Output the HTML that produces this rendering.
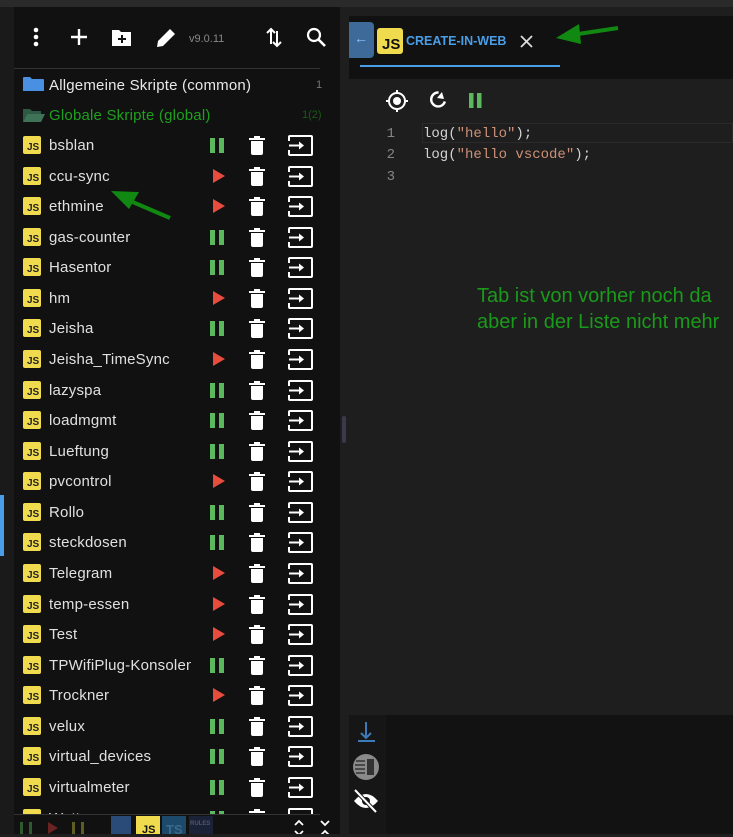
<!DOCTYPE html>
<html><head><meta charset="utf-8"><style>
*{margin:0;padding:0;box-sizing:border-box}
body{width:733px;height:834px;overflow:hidden;background:#1e1e1e;font-family:"Liberation Sans",sans-serif;position:relative}
.a{position:absolute}
.row{position:absolute;left:14px;width:326px;height:30px}
.js{position:absolute;left:9px;top:6px;width:18px;height:18px;background:#f0db4f;border-radius:2px;font:bold 10px "Liberation Sans",sans-serif;color:#222;padding:7px 0 0 4px;line-height:10px}
.nm{position:absolute;left:35px;top:7px;font-size:15px;color:#e0e0e0;white-space:nowrap;width:142px;overflow:hidden;letter-spacing:0.2px}
.ps{position:absolute;left:196px;top:8px;width:14px;height:15px;border-left:5px solid #5cb85c;border-right:5px solid #5cb85c}
.pl{position:absolute;left:199px;top:8px;width:0;height:0;border-left:12px solid #e74c3c;border-top:7px solid transparent;border-bottom:7px solid transparent}
.tr{position:absolute;left:235px;top:6px}
.mv{position:absolute;left:274px;top:5px}
</style></head><body>
<div class="a" style="left:0;top:0;width:733px;height:7px;background:#2a2a2a"></div>
<div class="a" style="left:0;top:7px;width:14px;height:827px;background:#1a1a1a"></div>
<div class="a" style="left:0;top:495px;width:4px;height:61px;background:#4a9ee8"></div>
<div class="a" style="left:14px;top:7px;width:326px;height:827px;background:#111"></div>
<svg class="a" style="left:24px;top:25px" width="310" height="26" viewBox="0 0 310 26">
<circle cx="12" cy="5" r="2.3" fill="#fff"/><circle cx="12" cy="12" r="2.3" fill="#fff"/><circle cx="12" cy="19" r="2.3" fill="#fff"/>
<path d="M55 4v16M47 12h16" stroke="#fff" stroke-width="2.4"/>
<path d="M88 5h7l2 2h10v14H88z" fill="#fff"/><path d="M98 10v8M94 14h8" stroke="#111" stroke-width="2"/>
<path d="M133 22l1-6 12-12 5 5-12 12z" fill="#fff"/>
<text x="165" y="17" font-size="11" fill="#888" font-family="Liberation Sans">v9.0.11</text>
<path d="M247 19V4M243 8l4-4 4 4M253 6v15M249 17l4 4 4-4" stroke="#fff" stroke-width="2" fill="none"/>
<circle cx="290" cy="10" r="6" stroke="#fff" stroke-width="2.2" fill="none"/><path d="M294 14l7 7" stroke="#fff" stroke-width="2.6"/>
</svg>
<div class="a" style="left:14px;top:68px;width:306px;height:1px;background:#333"></div>
<svg class="a" style="left:23px;top:76px" width="22" height="16"><path d="M0 2a1 1 0 0 1 1-1h6l2 2h11a1 1 0 0 1 1 1v11H0z" fill="#4a90e2"/></svg>
<div class="a" style="left:49px;top:77px;font-size:15px;color:#e8e8e8;letter-spacing:0.2px">Allgemeine Skripte (common)</div>
<div class="a" style="left:316px;top:79px;font-size:11px;color:#777">1</div>
<svg class="a" style="left:23px;top:107px" width="22" height="16"><path d="M0 2h7l2 2h9v3H4L0 15z" fill="#2e5a45"/><path d="M4 7h18l-4 8H0z" fill="#3e7358"/></svg>
<div class="a" style="left:49px;top:107px;font-size:15px;color:#1ea01e;letter-spacing:0.2px">Globale Skripte (global)</div>
<div class="a" style="left:302px;top:109px;font-size:11px;color:#1a5a1a">1(2)</div>
<div id="rows"></div>
<script>
var items=[["bsblan",1],["ccu-sync",0],["ethmine",0],["gas-counter",1],["Hasentor",1],["hm",0],["Jeisha",1],["Jeisha_TimeSync",0],["lazyspa",1],["loadmgmt",1],["Lueftung",1],["pvcontrol",0],["Rollo",1],["steckdosen",1],["Telegram",0],["temp-essen",0],["Test",0],["TPWifiPlug-Konsolen",1],["Trockner",0],["velux",1],["virtual_devices",1],["virtualmeter",1],["Watt",1]];
var h="";
items.forEach(function(it,i){var y=130+i*30.57;
h+='<div class="row" style="top:'+y+'px"><div class="js">JS</div><div class="nm">'+it[0]+'</div>'+(it[1]?'<div class="ps"></div>':'<div class="pl"></div>')+
'<svg class="tr" width="16" height="19"><rect x="0" y="2" width="16" height="2" fill="#fff"/><rect x="5" y="0" width="6" height="3" fill="#fff"/><path d="M2 5h12v12a2 2 0 0 1-2 2H4a2 2 0 0 1-2-2z" fill="#fff"/></svg>'+
'<svg class="mv" width="25" height="21"><path d="M1 6V2a1 1 0 0 1 1-1h21a1 1 0 0 1 1 1v17a1 1 0 0 1-1 1H2a1 1 0 0 1-1-1v-4" stroke="#fff" stroke-width="2" fill="none"/><path d="M1 10.5h11" stroke="#fff" stroke-width="2"/><path d="M11 6.5l5 4-5 4z" fill="#fff"/></svg></div>';});
document.getElementById("rows").innerHTML=h;
</script>
<div class="a" style="left:14px;top:814px;width:306px;height:20px;background:#111;border-top:1px solid #333"></div>
<div class="a" style="left:20px;top:822px;width:12px;height:12px;border-left:3px solid #2f5a2f;border-right:3px solid #2f5a2f"></div>
<div class="a" style="left:48px;top:822px;border-left:10px solid #6a2222;border-top:6px solid transparent;border-bottom:6px solid transparent"></div>
<div class="a" style="left:72px;top:822px;width:12px;height:12px;border-left:3px solid #5e5e22;border-right:3px solid #5e5e22"></div>
<div class="a" style="left:111px;top:816px;width:20px;height:18px;background:#2a4a78"></div>
<div class="a" style="left:136px;top:816px;width:24px;height:18px;background:#f0db4f;font:bold 11px 'Liberation Sans';color:#111;padding:8px 0 0 6px">JS</div>
<div class="a" style="left:162px;top:816px;width:24px;height:18px;background:#1d4a6a;font:bold 13px 'Liberation Sans';color:#3a6a8a;padding:6px 0 0 4px">TS</div>
<div class="a" style="left:189px;top:816px;width:24px;height:18px;background:#1a2238;font:bold 6px 'Liberation Sans';color:#556;padding:5px 0 0 1px">RULES</div>
<svg class="a" style="left:292px;top:818px" width="42" height="16"><path d="M3 7l4-4 4 4M3 13l4 4 4-4M29 3l4 4 4-4M29 17l4-4 4 4" stroke="#fff" stroke-width="1.8" fill="none"/></svg>
<div class="a" style="left:342px;top:416px;width:4px;height:27px;background:#3a3a4a;border-radius:2px"></div>
<div class="a" style="left:349px;top:16px;width:384px;height:63px;background:#111"></div>
<div class="a" style="left:349px;top:22px;width:25px;height:36px;background:#3d6a99;border-radius:0 4px 4px 0;color:#8cc3ff;font-size:14px;padding:8px 0 0 5px">←</div>
<div class="a" style="left:377px;top:28px;width:26px;height:26px;background:#f0db4f;border-radius:3px;font:bold 15px 'Liberation Sans';color:#111;padding:9px 0 0 5px;line-height:15px">JS</div>
<div class="a" style="left:406px;top:34px;font-size:12.5px;font-weight:bold;color:#4a9ee8">CREATE-IN-WEB</div>
<svg class="a" style="left:520px;top:35px" width="13" height="13"><path d="M1 1l11 11M12 1L1 12" stroke="#ddd" stroke-width="1.8"/></svg>
<div class="a" style="left:360px;top:65px;width:200px;height:2px;background:#4a9ee8"></div>
<svg class="a" style="left:385px;top:89px" width="110" height="24">
<circle cx="12" cy="12" r="8" stroke="#fff" stroke-width="2" fill="none"/><circle cx="12" cy="12" r="4" fill="#fff"/><path d="M12 1v4M12 19v4M1 12h4M19 12h4" stroke="#fff" stroke-width="2"/>
<path d="M58 6.5A7 7 0 1 0 58 17.5" stroke="#fff" stroke-width="2.4" fill="none" transform="rotate(-35 51 12)"/><path d="M57 3l2 7-7-1z" fill="#fff"/>
<rect x="84" y="4" width="4.5" height="15" fill="#5cb85c"/><rect x="92" y="4" width="4.5" height="15" fill="#5cb85c"/>
</svg>
<div class="a" style="left:422px;top:123px;width:311px;height:20px;border:1px solid #2a2a2a"></div>
<div class="a" style="left:380px;top:124px;font:14px/21.3px 'Liberation Mono',monospace;color:#858585;text-align:right;width:15px">1<br>2<br>3</div>
<div class="a" style="left:423px;top:124px;font:14px/21.3px 'Liberation Mono',monospace;color:#d4d4d4;white-space:pre">log(<span style="color:#ce9178">"hello"</span>);
log(<span style="color:#ce9178">"hello vscode"</span>);</div>
<div class="a" style="left:477px;top:283px;font-size:20px;line-height:26px;color:#1a9a1a;white-space:nowrap">Tab ist von vorher noch da<br>aber in der Liste nicht mehr</div>
<div class="a" style="left:349px;top:715px;width:384px;height:119px;background:#121212"></div>
<div class="a" style="left:349px;top:715px;width:37px;height:119px;background:#161616"></div>
<svg class="a" style="left:352px;top:720px" width="30" height="100">
<path d="M14 2v16M9 13l5 5 5-5M6 21h17" stroke="#3d7ab8" stroke-width="2" fill="none"/>
<circle cx="14" cy="47" r="13" fill="#8a8a8a"/><rect x="15" y="39" width="7" height="16" fill="#333"/><path d="M4 41h9M3 45h10M3 49h10M4 53h9" stroke="#333" stroke-width="1.6"/>
<path d="M2 81q12-14 24 0q-12 14-24 0z" fill="#fff"/><circle cx="14" cy="81" r="4" fill="#161616"/><path d="M3 70l21 22" stroke="#161616" stroke-width="4"/><path d="M3 70l21 22" stroke="#fff" stroke-width="2"/>
</svg>
<svg class="a" style="left:0;top:0" width="733" height="834">
<path d="M170 218L128 200" stroke="#118811" stroke-width="4"/><path d="M111 191l28 1-10 17z" fill="#118811"/>
<path d="M618 28L578 34" stroke="#118811" stroke-width="4"/><path d="M556 38l23-14 2 20z" fill="#118811"/>
</svg>
</body></html>
